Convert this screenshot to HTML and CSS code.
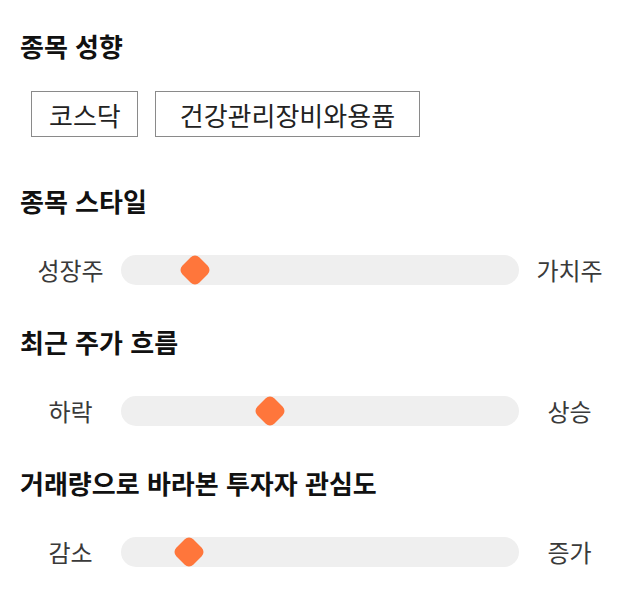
FILE: index.html
```html
<!DOCTYPE html>
<html lang="ko">
<head>
<meta charset="utf-8">
<link rel="stylesheet" href="styles.css">
</head>
<body>
<div class="page">
  <section class="sec">
    <h2 class="title">종목 성향</h2>
    <div class="chips">
      <span class="chip chip-short">코스닥</span>
      <span class="chip chip-long">건강관리장비와용품</span>
    </div>
  </section>
  <section class="sec">
    <h2 class="title">종목 스타일</h2>
    <div class="slider">
      <span class="lab">성장주</span>
      <div class="track"><span class="thumb" style="left: 18.6%"></span></div>
      <span class="lab">가치주</span>
    </div>
  </section>
  <section class="sec">
    <h2 class="title">최근 주가 흐름</h2>
    <div class="slider">
      <span class="lab">하락</span>
      <div class="track"><span class="thumb" style="left: 37.4%"></span></div>
      <span class="lab">상승</span>
    </div>
  </section>
  <section class="sec">
    <h2 class="title">거래량으로 바라본 투자자 관심도</h2>
    <div class="slider">
      <span class="lab">감소</span>
      <div class="track"><span class="thumb" style="left: 17%"></span></div>
      <span class="lab">증가</span>
    </div>
  </section>
</div>
</body>
</html>
```
FILE: styles.css
```css
html, body {
  margin: 0;
  padding: 0;
  background: #ffffff;
}
body {
  font-family: "Noto Sans CJK KR", "Noto Sans", sans-serif;
  color: #111;
}
.page {
  width: 600px;
  padding: 29px 20px 0 20px;
}
.title {
  margin: 0;
  font-size: 26px;
  font-weight: 700;
  line-height: 34px;
  color: #111;
}
.chips {
  display: flex;
  gap: 17px;
  margin: 28px 0 0 11px;
  padding-bottom: 47px;
}
.chip {
  display: flex;
  align-items: center;
  height: 46px;
  box-sizing: border-box;
  padding: 0 20px;
  border: 1px solid #8a8a8a;
  font-size: 26px;
  color: #222;
}
.chip-short {
  padding: 0 16px 0 17px;
}
.chip-long {
  padding: 0 24px;
}
.slider {
  display: grid;
  grid-template-columns: 101px 1fr 101px;
  align-items: center;
  margin-top: 37px;
  padding-bottom: 40px;
}
.lab {
  text-align: center;
  font-size: 24px;
  color: #3a3a3a;
  line-height: 30px;
}
.track {
  position: relative;
  height: 30px;
  border-radius: 15px;
  background: #efefef;
}
.thumb {
  position: absolute;
  top: 50%;
  width: 24px;
  height: 24px;
  border-radius: 6px;
  background: #ff763b;
  transform: translate(-50%, -50%) rotate(45deg);
}
```
